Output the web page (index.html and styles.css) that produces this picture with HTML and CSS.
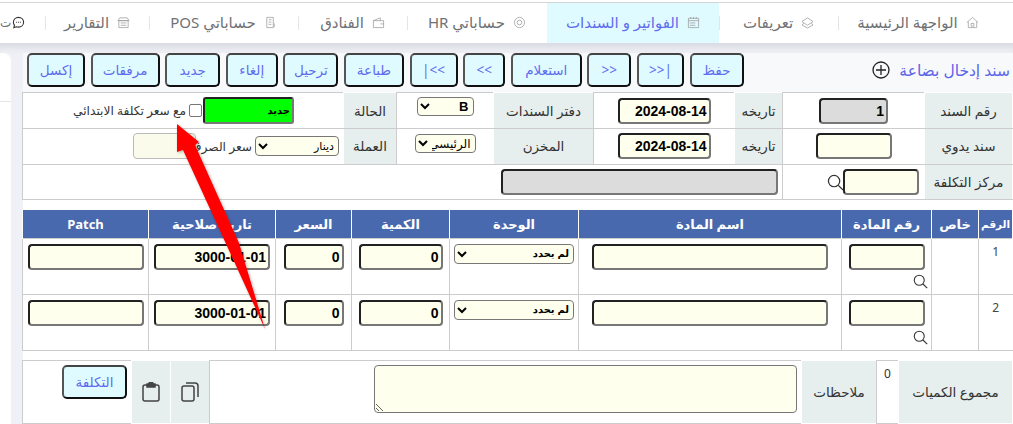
FILE: index.html
```html
<!DOCTYPE html>
<html lang="ar" dir="rtl">
<head>
<meta charset="utf-8">
<title>سند إدخال بضاعة</title>
<link rel="stylesheet" href="styles.css">
</head>
<body>
<nav class="nav">
  <a class="tab t1"><svg class="ti" viewBox="0 0 14 14"><path d="M1 7 7 1.500 13 7M2.500 6v6.500h9V6M5.500 8h3v3h-3z"/></svg>الواجهة الرئيسية</a>
  <a class="tab t2"><svg class="ti" viewBox="0 0 14 14"><path d="M7 2 13 6 7 10 1 6zM3 8 1 9.500 7 13l6-3.500L11 8"/></svg>تعريفات</a>
  <a class="tab t3 active"><svg class="ti" viewBox="0 0 14 14"><path d="M1.500 2.500h11v10h-11zM1.500 5h11M3 7.500h6M3 10h6M4 1v2M7 1v2M10 1v2"/></svg>الفواتير و السندات</a>
  <a class="tab t4"><svg class="ti" viewBox="0 0 14 14"><circle cx="7" cy="7" r="5.500"/><circle cx="7" cy="7" r="2.500"/></svg>حساباتي HR</a>
  <a class="tab t5"><svg class="ti" viewBox="0 0 14 14"><path d="M1.500 5h11v7.500h-11zM1.500 5 9 2v3M9 8.500h3.500"/></svg>الفنادق</a>
  <a class="tab t6"><svg class="ti" viewBox="0 0 14 14"><path d="M3 1.500h7v11H3zM5 4h3M5 6.500h3M5 9h3M11 8v4"/></svg>حساباتي POS</a>
  <a class="tab t7"><svg class="ti" viewBox="0 0 14 14"><path d="M2 5h10v7.500H2zM1 5l2-3h8l2 3zM4 7.500h6M4 10h6"/></svg>التقارير</a>
  <a class="tab t8"><svg class="ti dark" viewBox="0 0 14 14"><path d="M7 1.500c3.300 0 5.500 2.300 5.500 5.200S10.300 12 7 12c-.9 0-1.700-.1-2.400-.4L2 12.500l.6-2.600C1.900 9 1.500 8 1.500 6.700 1.500 3.800 3.700 1.500 7 1.500z"/><path d="M4.500 6.800h1M6.500 6.800h1M8.500 6.800h1"/></svg><span class="clip">ت</span></a>
</nav>
<div class="page">
  <aside class="side"></aside>
  <main class="main">
    <div class="toolbar">
      <h1 class="title">سند إدخال بضاعة<svg class="plus" viewBox="0 0 18 18"><circle cx="9" cy="9" r="8"/><path d="M9 4v10M4 9h10"/></svg></h1>
      <div class="buttons">
        <button class="btn b54">حفظ</button>
        <button class="btn b47">|&lt;&lt;</button>
        <button class="btn b44">&lt;&lt;</button>
        <button class="btn b71">استعلام</button>
        <button class="btn b42">&gt;&gt;</button>
        <button class="btn b48">&gt;&gt;|</button>
        <button class="btn b60">طباعة</button>
        <button class="btn b55">ترحيل</button>
        <button class="btn b52">إلغاء</button>
        <button class="btn b55">جديد</button>
        <button class="btn b69">مرفقات</button>
        <button class="btn b58">إكسل</button>
      </div>
    </div>
    <table class="form">
      <colgroup><col class="c1"><col class="c2"><col class="c3"><col class="c4"><col class="c5"><col class="c6"><col class="c7"><col class="c8"></colgroup>
      <tr>
        <td class="lab">رقم السند</td>
        <td class="val"><input class="inp gray w69" value="1" readonly></td>
        <td class="lab">تاريخه</td>
        <td class="val"><input class="inp date" value="2024-08-14" readonly></td>
        <td class="lab">دفتر السندات</td>
        <td class="val top"><select class="sel b"><option>B</option></select></td>
        <td class="lab">الحالة</td>
        <td class="val left">
          <div class="status"><input class="inp green" value="جديد" readonly><input type="checkbox" class="chk"><span class="txt">مع سعر تكلفة الابتدائي</span></div>
        </td>
      </tr>
      <tr>
        <td class="lab">سند يدوي</td>
        <td class="val"><input class="inp w76" readonly></td>
        <td class="lab">تاريخه</td>
        <td class="val"><input class="inp date" value="2024-08-14" readonly></td>
        <td class="lab">المخزن</td>
        <td class="val top"><select class="sel w"><option>الرئيسي</option></select></td>
        <td class="lab">العملة</td>
        <td class="val left">
          <div class="status second"><select class="sel cur"><option>دينار</option></select><span class="txt">سعر الصرف</span><input class="inp rate" readonly></div>
        </td>
      </tr>
      <tr>
        <td class="lab">مركز التكلفة</td>
        <td class="val"><div class="cost"><input class="inp w76" readonly><svg class="mag" viewBox="0 0 18 18"><circle cx="7.500" cy="7.500" r="6"/><path d="m12 12 5 5"/></svg></div></td>
        <td class="val" colspan="6"><input class="inp gray wide" readonly></td>
      </tr>
    </table>
    <table class="items">
      <colgroup><col class="i1"><col class="i2"><col class="i3"><col class="i4"><col class="i5"><col class="i6"><col class="i7"><col class="i8"><col class="i9"></colgroup>
      <thead><tr><th class="narrow">الرقم</th><th>خاص</th><th>رقم المادة</th><th>اسم المادة</th><th>الوحدة</th><th>الكمية</th><th>السعر</th><th>تاريخ صلاحية</th><th>Patch</th></tr></thead>
      <tbody>
        <tr>
          <td class="idx">1</td><td></td>
          <td><input class="inp w76" readonly><svg class="mag small" viewBox="0 0 18 18"><circle cx="7.500" cy="7.500" r="6"/><path d="m12 12 5 5"/></svg></td>
          <td><input class="inp w236" readonly></td>
          <td class="unit"><select class="sel u"><option>لم يحدد</option></select></td>
          <td><input class="inp w84" value="0" readonly></td>
          <td><input class="inp w60" value="0" readonly></td>
          <td><input class="inp w116" value="3000-01-01" readonly></td>
          <td><input class="inp w116" readonly></td>
        </tr>
        <tr>
          <td class="idx">2</td><td></td>
          <td><input class="inp w76" readonly><svg class="mag small" viewBox="0 0 18 18"><circle cx="7.500" cy="7.500" r="6"/><path d="m12 12 5 5"/></svg></td>
          <td><input class="inp w236" readonly></td>
          <td class="unit"><select class="sel u"><option>لم يحدد</option></select></td>
          <td><input class="inp w84" value="0" readonly></td>
          <td><input class="inp w60" value="0" readonly></td>
          <td><input class="inp w116" value="3000-01-01" readonly></td>
          <td><input class="inp w116" readonly></td>
        </tr>
      </tbody>
    </table>
    <table class="foot">
      <colgroup><col class="f1"><col class="f2"><col class="f3"><col class="f4"><col class="f5"><col class="f6"><col class="f7"></colgroup>
      <tr>
        <td class="lab">مجموع الكميات</td>
        <td class="zero">0</td>
        <td class="lab">ملاحظات</td>
        <td class="note"><textarea class="area" readonly></textarea></td>
        <td class="lab ic"><svg class="doc" viewBox="0 0 18 20"><rect x="1" y="4" width="12" height="15" rx="2"/><path d="M5 1h9a3 3 0 0 1 3 3v11"/></svg></td>
        <td class="lab ic"><svg class="doc" viewBox="0 0 18 20"><path d="M5 3H3a2 2 0 0 0-2 2v12a2 2 0 0 0 2 2h12a2 2 0 0 0 2-2V5a2 2 0 0 0-2-2h-2"/><path class="solid" d="M5 2h2a2 2 0 0 1 4 0h2v3H5z"/></svg></td>
        <td class="costcell"><button class="btn cost-btn">التكلفة</button></td>
      </tr>
    </table>
  </main>
</div>
<svg class="arrow" viewBox="0 0 1013 424"><defs><filter id="sh" x="-20%" y="-20%" width="140%" height="140%"><feDropShadow dx="1" dy="1" stdDeviation="1.500" flood-color="#000" flood-opacity=".3"/></filter></defs><path filter="url(#sh)" d="M177 124 199 142 195 145 239 243 265 329 183 150 177 152z"/></svg>
</body>
</html>
```
FILE: styles.css
```css
*{box-sizing:border-box}
html,body{margin:0;padding:0}
body{width:1013px;height:424px;overflow:hidden;background:#fff;font-family:"Noto Sans","DejaVu Sans",sans-serif;font-size:13px;color:#333;position:relative;padding-top:2px}
.nav{display:flex;height:41px;background:#fff;border-top:1px solid #d4d4d4;padding-right:15px;overflow:hidden}
.tab{display:flex;align-items:center;justify-content:center;gap:8px;font-size:15px;color:#6f7175;position:relative;flex:none;padding-bottom:2px}
.tab::after{content:"";position:absolute;left:0;top:13px;height:14px;border-left:1px solid #e5e5e5}
.t1{width:160px}.t2{width:119px}.t3{width:172px}.t4{width:140px}.t5{width:109px}.t6{width:149px}.t7{width:104px}
.t8{width:45px;justify-content:flex-end;gap:1px}
.clip{font-size:12px}
.t8::after,.active::after{display:none}
.tab.active{background:#e0fbff;color:#5f6cf0}
.ti{width:13px;height:13px;fill:none;stroke:#9a9a9a;stroke-width:.8;flex:none}
.ti.dark{stroke:#333;stroke-width:1.200}
.page{display:flex;direction:ltr;height:381px;background:#eff1f7;box-shadow:inset 0 10px 8px -6px #d6d7de}
.side{width:11px;flex:none;background:#fff;border-top-right-radius:8px;margin-top:10px}
.side::before{content:"";display:block;height:48px;border-bottom:1px solid #e6e6e6}
.main{width:990px;margin-left:12px;flex:none;direction:rtl;margin-top:10px;display:flex;flex-direction:column;background:linear-gradient(#f8f9fb 0 40px,#fff 40px)}
.toolbar{height:40px;display:flex;justify-content:space-between;align-items:flex-start}
.title{margin:5px 3px 0 0;font-size:15.500px;font-weight:400;color:#5c64e8;display:flex;align-items:center;gap:9px;line-height:24px;white-space:nowrap}
.plus{width:18px;height:18px;fill:none;stroke:#222;stroke-width:1.300;flex:none}
.buttons{display:flex;gap:5.600px;margin-left:4px}
.btn{height:34px;background:#e0fbff;border:2px solid;border-color:#444 #111 #111 #555;border-radius:5px;color:#5f6cf0;font-family:inherit;font-size:13.500px;padding:0;flex:none}
.b54{width:54px}.b47{width:47px}.b44{width:44px}.b71{width:71px}.b42{width:42px}.b48{width:48px}.b60{width:60px}.b55{width:55px}.b52{width:52px}.b69{width:69px}.b58{width:58px}
table{border-collapse:collapse;table-layout:fixed;background:#fff}
td,th{padding:0}
.form{width:990px}
.form td{border:1px solid #ccc;height:35.700px;text-align:center;font-size:13.500px}
.form .lab{background:#e6eeee;border-color:#fff #fff #ccc}
.c1{width:88px}.c2{width:142px}.c3{width:48px}.c4{width:141px}.c5{width:100px}.c6{width:97px}.c7{width:53px}.c8{width:321px}
.inp{height:26px;border:2px inset #777;border-radius:4px;background:#ffffee;font-family:"Liberation Sans","DejaVu Sans",sans-serif;font-size:14px;font-weight:700;color:#000;padding:0 2px;text-align:right;outline:0;vertical-align:middle}
.gray{background:#dcdcdc}
.date{width:93px}
.w60{width:60px}.w69{width:69px}.w76{width:76px}.w84{width:84px}.w116{width:116px}.w236{width:236px}
.wide{display:block;width:277px;margin-right:4px}
.top{vertical-align:top}
.sel{background:#ffffee;border:1px solid #777;border-radius:4px;font-family:"Liberation Sans","DejaVu Sans",sans-serif;font-size:11px;color:#000;font-weight:700;height:19px;padding:0}
.b{width:57px;margin-top:4px;font-size:13px}
.w{width:61px;margin-top:5px;font-weight:400;font-size:12px}
.left{text-align:right!important}
.status{display:flex;align-items:center;padding-right:49px;height:100%}
.green{width:91px;height:27px;background:#00ff00;font-size:10px;border-radius:3px;flex:none}
.chk{width:13px;height:13px;margin:0 1px 0 0;flex:none;appearance:none;background:#fff;border:1px solid #777;border-radius:2px}
.txt{font-size:12.200px;color:#333;margin-right:3px;white-space:nowrap}
.second{padding-right:4px}
.second .txt{width:56px;flex:none}
.cur{width:84px;font-weight:400;height:20px;flex:none}
.rate{width:63px;height:26px;background:#fbfbec;border:1px solid #bbb;flex:none}
.cost{display:flex;align-items:center;padding-right:5px}
.mag{width:17px;height:17px;fill:none;stroke:#333;stroke-width:1.300;flex:none;margin-right:-1px}
.small{display:block;width:15px;height:15px;margin:4px 3px 0 0}
.items{width:990px;margin-top:10px}
.i1{width:34px}.i2{width:47px}.i3{width:90px}.i4{width:263px}.i5{width:129px}.i6{width:98px}.i7{width:76px}.i8{width:127px}.i9{width:126px}
.items th{background:#4869ae;color:#fff;font-size:13px;font-weight:700;height:28px;border:1px solid #fff;border-top:0;border-bottom:0;white-space:nowrap}
.items th.narrow{font-size:10.500px}
.items td{border:1px solid #ccc;height:56px;vertical-align:top;padding-top:5px;text-align:center}
.items .idx{padding-top:4px;font-size:12px;color:#444;border-right:0}
.items .unit{padding:5px 4px 0}
.u{width:120px;display:block;height:20px;font-size:10px}
.foot{width:990px;margin-top:9px;height:65px}
.foot td{border:1px solid #ccc}
.f1{width:114px}.f2{width:22px}.f3{width:75px}.f4{width:592px}.f5{width:39px}.f6{width:39px}.f7{width:109px}
.foot .lab{background:#e6eeee;border-color:#fff;text-align:center;font-size:13.500px}
.zero{vertical-align:top;text-align:center;font-size:12px;padding-top:4px!important}
.note{vertical-align:top;padding:4px 4px 0 0!important}
.area{width:423px;height:48px;display:block;background:#ffffee;border:1px solid #777;border-radius:4px;resize:both;outline:0}
.doc{width:18px;height:20px;fill:none;stroke:#444;stroke-width:1.500;vertical-align:middle}
.doc .solid{fill:#444}
.costcell{vertical-align:top;padding:4px 4px 0 0!important}
.cost-btn{width:65px;display:block}
.arrow{position:absolute;left:0;top:0;width:1013px;height:424px;pointer-events:none;fill:#fe0000}
```
